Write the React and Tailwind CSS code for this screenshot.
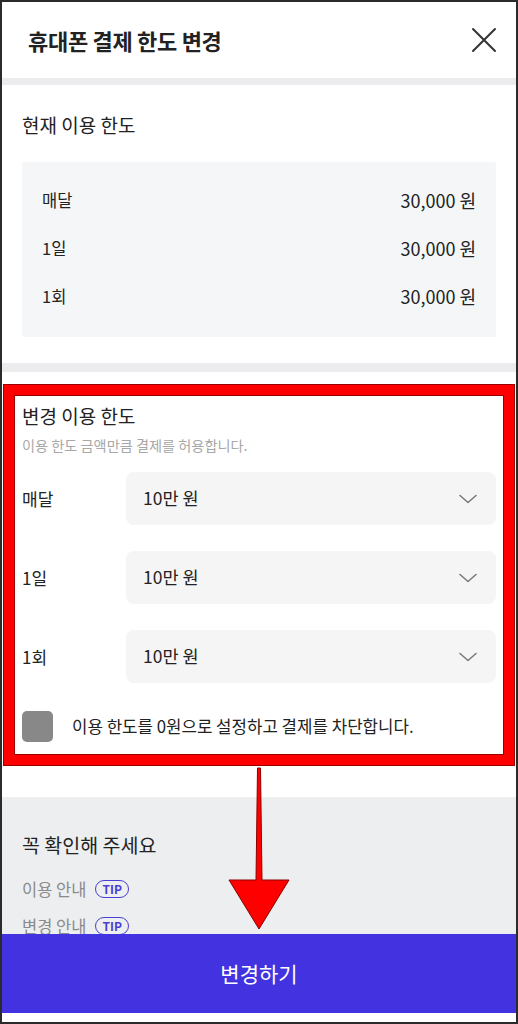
const font = { fontFamily: '"Noto Sans CJK KR", "Noto Sans", sans-serif' };

const current = [
  { label: "매달", value: "30,000 원" },
  { label: "1일", value: "30,000 원" },
  { label: "1회", value: "30,000 원" },
];

const Chevron = () => (
  <svg width="18" height="10" viewBox="0 0 18 10" fill="none">
    <path d="M1 1.5 L9 8.5 L17 1.5" stroke="#7a7a7a" strokeWidth="1.6" strokeLinecap="round" strokeLinejoin="round" />
  </svg>
);

const Tip = () => (
  <span className="inline-flex items-center justify-center h-[18px] px-[6px] rounded-full border-[1.5px] border-[#4a3fd2] text-[#4a3fd2] text-[12px] font-bold leading-none">
    TIP
  </span>
);

const App = () => {
  return (
    <div className="relative w-[518px] h-[1024px] border-2 border-[#2b2b2b] bg-white overflow-hidden flex flex-col text-[#222]" style={font}>
      {/* Header */}
      <div className="h-[76px] shrink-0 flex items-center justify-between pl-[26px] pr-[19px]">
        <h1 className="text-[22px] font-bold tracking-[-0.3px]">휴대폰 결제 한도 변경</h1>
        <svg width="26" height="26" viewBox="0 0 26 26" fill="none">
          <path d="M2 2 L24 24 M24 2 L2 24" stroke="#333" strokeWidth="2" strokeLinecap="round" />
        </svg>
      </div>
      <div className="h-[7px] shrink-0 bg-[#ececee]" />

      {/* Current limit */}
      <div className="h-[278px] shrink-0 px-[20px] pt-[27px]">
        <h2 className="text-[19px] leading-[26px]">현재 이용 한도</h2>
        <div className="mt-[24px] bg-[#f5f6f8] rounded-[2px] px-[20px] pt-[14px] pb-[17px]">
          {current.map((r) => (
            <div key={r.label} className="h-[48px] flex items-center justify-between">
              <span className="text-[16.5px]">{r.label}</span>
              <span className="text-[18px]">{r.value}</span>
            </div>
          ))}
        </div>
      </div>
      <div className="h-[9px] shrink-0 bg-[#ececee]" />

      {/* New limit */}
      <div className="h-[425px] shrink-0 px-[20px] pt-[31px]">
        <h2 className="text-[19px] leading-[26px]">변경 이용 한도</h2>
        <p className="mt-[7px] text-[14.2px] leading-[18px] text-[#a8a8a8]">이용 한도 금액만큼 결제를 허용합니다.</p>
        <div className="mt-[18px] flex flex-col gap-[26px]">
          {["매달", "1일", "1회"].map((l) => (
            <div key={l} className="flex items-center">
              <span className="w-[104px] text-[17px]">{l}</span>
              <div className="flex-1 h-[53px] bg-[#f5f5f6] rounded-[8px] flex items-center justify-between pl-[17px] pr-[19px]">
                <span className="text-[17.5px]">10만 원</span>
                <Chevron />
              </div>
            </div>
          ))}
        </div>
        <div className="mt-[28px] flex items-center gap-[19px]">
          <div className="w-[31px] h-[31px] rounded-[5px] bg-[#888]" />
          <span className="text-[16.8px]">이용 한도를 0원으로 설정하고 결제를 차단합니다.</span>
        </div>
      </div>

      {/* Notice */}
      <div className="flex-1 bg-[#eceef0] px-[20px] pt-[35px] overflow-hidden">
        <h2 className="text-[19.5px] leading-[26px]">꼭 확인해 주세요</h2>
        <div className="mt-[20px] flex flex-col gap-[15px]">
          {["이용 안내", "변경 안내"].map((t) => (
            <div key={t} className="h-[22px] flex items-center gap-[9px] text-[16.5px] text-[#8a8a8a]">
              <span>{t}</span>
              <Tip />
            </div>
          ))}
        </div>
      </div>
      <div className="h-[9px] shrink-0 bg-white" />

      {/* Bottom button */}
      <button className="absolute left-0 right-0 top-[932px] h-[79px] bg-[#4232df] text-white text-[21px] flex items-center justify-center">
        변경하기
      </button>

      {/* Annotation: red box */}
      <div className="absolute left-[2px] top-[383px] w-[510px] h-[380px] border-[10px] border-[#ff0000] shadow-[0_0_0_1px_#9b0000,inset_0_0_0_1px_#9b0000] pointer-events-none" />

      {/* Annotation: arrow */}
      <svg className="absolute left-[226px] top-[764px] pointer-events-none" width="62" height="166" viewBox="0 0 62 166">
        <polygon points="29.5,2 32.5,2 34,114 61,114 31,163 1,114 28,114" fill="#ff0000" stroke="#8b0000" strokeWidth="1" strokeLinejoin="round" />
      </svg>
    </div>
  );
};

export default App;
